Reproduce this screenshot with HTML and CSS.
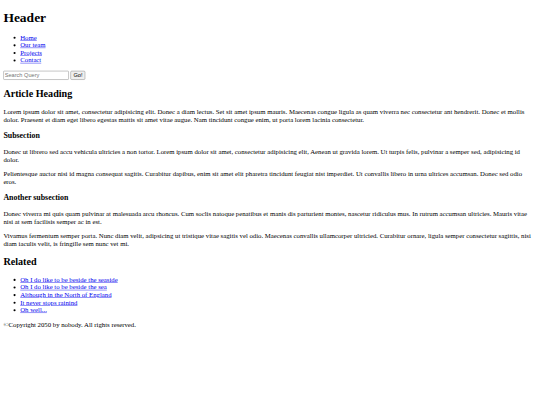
FILE: index.html
```html
<!DOCTYPE html>
<html>
<head>
<meta charset="utf-8">
<link rel="stylesheet" href="styles.css">
</head>
<body class="viewport">
<div class="frame">
<div class="canvas">
<header class="site-header">
  <h1 class="title">Header</h1>
  <nav>
    <ul class="list">
      <li><a href="#">Home</a></li>
      <li><a href="#">Our team</a></li>
      <li><a href="#">Projects</a></li>
      <li><a href="#">Contact</a></li>
    </ul>
  </nav>
  <form class="search">
    <input class="search-input" type="text" placeholder="Search Query"> <button class="search-btn" type="button">Go!</button>
  </form>
</header>
<main>
  <article>
    <h2 class="h2">Article Heading</h2>
    <p class="p">Lorem ipsum dolor sit amet, consectetur adipisicing elit. Donec a diam lectus. Set sit amet ipsum mauris. Maecenas congue ligula as quam viverra nec consectetur ant hendrerit. Donec et mollis dolor. Praesent et diam eget libero egestas mattis sit amet vitae augue. Nam tincidunt congue enim, ut porta lorem lacinia consectetur.</p>
    <h3 class="h3">Subsection</h3>
    <p class="p">Donec ut librero sed accu vehicula ultricies a non tortor. Lorem ipsum dolor sit amet, consectetur adipisicing elit, Aenean ut gravida lorem. Ut turpis felis, pulvinar a semper sed, adipisicing id dolor.</p>
    <p class="p">Pelientesque auctor nisi id magna consequat sagitis. Curabitur dapibus, enim sit amet elit pharetra tincidunt feugiat nist imperdiet. Ut convallis libero in urna ultrices accumsan. Donec sed odio eros.</p>
    <h3 class="h3">Another subsection</h3>
    <p class="p">Donec viverra mi quis quam pulvinar at malesuada arcu rhoncus. Cum soclis natoque penatibus et manis dis parturient montes, nascetur ridiculus mus. In rutrum accumsan ultricies. Mauris vitae nisi at sem facilisis semper ac in est.</p>
    <p class="p">Vivamus fermentum semper porta. Nunc diam velit, adipsicing ut tristique vitae sagitis vel odio. Maecenas convallis ullamcorper ultricied. Curabitur ornare, ligula semper consectetur sagittis, nisi diam iaculis velit, is fringille sem nunc vet mi.</p>
  </article>
  <aside>
    <h2 class="h2">Related</h2>
    <ul class="list">
      <li><a href="#">Oh I do like to be beside the seaside</a></li>
      <li><a href="#">Oh I do like to be beside the sea</a></li>
      <li><a href="#">Although in the North of England</a></li>
      <li><a href="#">It never stops rainind</a></li>
      <li><a href="#">Oh well...</a></li>
    </ul>
  </aside>
</main>
<footer>
  <p class="p">©Copyright 2050 by nobody. All rights reserved.</p>
</footer>
</div>
</div>
</body>
</html>
```
FILE: styles.css
```css
html, .viewport {
  margin: 0;
  padding: 0;
  background: #fff;
}
/* fixed window that clips the scaled page */
.frame {
  width: 540px;
  height: 405px;
  overflow: hidden;
}
/* the page is laid out at 1280px and shown at 540/1280 */
.canvas {
  width: 1264px;
  padding: 8px;
  transform: scale(0.421875);
  transform-origin: 0 0;
  font-family: "Liberation Serif", "Times New Roman", serif;
  font-size: 16px;
  color: #000;
}
.title {
  font-size: 2em;
  margin: 0.5em 0 0.6em;
  font-weight: bold;
}
.h2 {
  font-size: 1.5em;
  margin: 0.83em 0;
  font-weight: bold;
}
.h3 {
  font-size: 1.17em;
  margin: 1em 0;
  font-weight: bold;
}
.p { margin: 1em 0; }
.list {
  margin: 1em 0;
  padding-left: 40px;
  list-style: disc;
}
.list a { color: #0000ee; text-decoration: underline; }
.search { margin: 0; }
.search-input {
  font-family: "Liberation Sans", Arial, sans-serif;
  font-size: 13.333px;
  padding: 1px 2px;
  border: 1px solid #767676;
  border-radius: 2px;
  width: 149px;
  height: 17px;
  vertical-align: middle;
}
.search-input::placeholder { color: #757575; }
.search-btn {
  font-family: "Liberation Sans", Arial, sans-serif;
  font-size: 13.333px;
  padding: 1px 6px;
  border: 1px solid #767676;
  border-radius: 3px;
  background: #efefef;
  color: #000;
  height: 21px;
  vertical-align: middle;
}
```
